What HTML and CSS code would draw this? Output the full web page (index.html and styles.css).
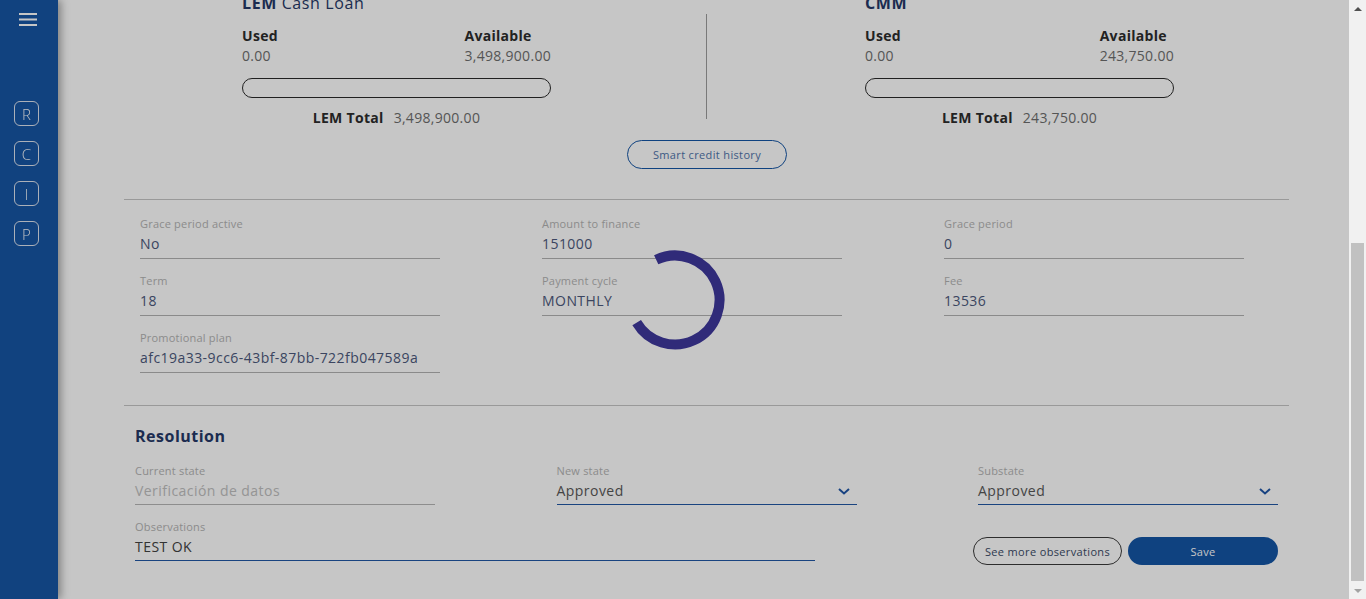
FILE: index.html
```html
<!DOCTYPE html>
<html lang="en">
<head>
<meta charset="utf-8">
<title>Credit request</title>
<link rel="stylesheet" href="styles.css">
</head>
<body>
<aside class="sidebar">
  <button class="menu-btn" aria-label="Menu">
    <svg width="18" height="14" viewBox="0 0 18 14"><path d="M0 1h18M0 6.5h18M0 12h18" stroke="#fff" stroke-width="2"/></svg>
  </button>
  <nav class="quick-nav">
    <a class="badge">R</a>
    <a class="badge">C</a>
    <a class="badge">I</a>
    <a class="badge">P</a>
  </nav>
</aside>

<main class="main">
  <section class="section">
    <h2 class="section-title">Customer information</h2>
    <div class="fields-grid">
      <div class="field"><div class="field-label">Name</div><div class="field-value">Juan Pérez</div></div>
      <div class="field"><div class="field-label">Document</div><div class="field-value">1020304050</div></div>
      <div class="field"><div class="field-label">Phone</div><div class="field-value">3001234567</div></div>
      <div class="field"><div class="field-label">Email</div><div class="field-value">juan@example.com</div></div>
      <div class="field"><div class="field-label">City</div><div class="field-value">Bogotá</div></div>
      <div class="field"><div class="field-label">Store</div><div class="field-value">Main</div></div>
      <div class="field"><div class="field-label">Product</div><div class="field-value">Cash Loan</div></div>
      <div class="field"><div class="field-label">Request date</div><div class="field-value">2023-05-10</div></div>
      <div class="field"><div class="field-label">Channel</div><div class="field-value">Web</div></div>
    </div>
  </section>
  <hr class="divider">

  <section class="credit-lines">
    <div class="credit-col">
      <h3 class="credit-title"><b>LEM</b> Cash Loan</h3>
      <div class="credit-figures">
        <div><div class="fig-label">Used</div><div class="fig-value">0.00</div></div>
        <div><div class="fig-label">Available</div><div class="fig-value">3,498,900.00</div></div>
      </div>
      <div class="bar"></div>
      <div class="credit-total"><b>LEM Total</b><span>3,498,900.00</span></div>
    </div>
    <div class="v-sep"></div>
    <div class="credit-col">
      <h3 class="credit-title"><b>CMM</b></h3>
      <div class="credit-figures">
        <div><div class="fig-label">Used</div><div class="fig-value">0.00</div></div>
        <div><div class="fig-label">Available</div><div class="fig-value">243,750.00</div></div>
      </div>
      <div class="bar"></div>
      <div class="credit-total"><b>LEM Total</b><span>243,750.00</span></div>
    </div>
  </section>
  <div class="center-row"><button class="btn btn-outline-blue">Smart credit history</button></div>
  <hr class="divider">

  <section class="fields-grid loan-grid">
    <div class="field"><div class="field-label">Grace period active</div><div class="field-value">No</div></div>
    <div class="field"><div class="field-label">Amount to finance</div><div class="field-value">151000</div></div>
    <div class="field"><div class="field-label">Grace period</div><div class="field-value">0</div></div>
    <div class="field"><div class="field-label">Term</div><div class="field-value">18</div></div>
    <div class="field"><div class="field-label">Payment cycle</div><div class="field-value">MONTHLY</div></div>
    <div class="field"><div class="field-label">Fee</div><div class="field-value">13536</div></div>
    <div class="field"><div class="field-label">Promotional plan</div><div class="field-value">afc19a33-9cc6-43bf-87bb-722fb047589a</div></div>
  </section>
  <hr class="divider divider-res">

  <section class="resolution">
    <h2 class="res-title">Resolution</h2>
    <div class="res-grid">
      <div class="field"><div class="field-label">Current state</div><div class="field-value disabled">Verificación de datos</div></div>
      <div class="field"><div class="field-label">New state</div><div class="field-value select"><span>Approved</span><svg class="chev" width="12" height="7" viewBox="0 0 12 7"><path d="M1 1l5 4.5L11 1" fill="none" stroke="#1f56a6" stroke-width="2"/></svg></div></div>
      <div class="field"><div class="field-label">Substate</div><div class="field-value select"><span>Approved</span><svg class="chev" width="12" height="7" viewBox="0 0 12 7"><path d="M1 1l5 4.5L11 1" fill="none" stroke="#1f56a6" stroke-width="2"/></svg></div></div>
    </div>
    <div class="obs-row">
      <div class="field obs-field"><div class="field-label">Observations</div><div class="field-value active">TEST OK</div></div>
      <div class="actions">
        <button class="btn btn-outline-dark">See more observations</button>
        <button class="btn btn-primary">Save</button>
      </div>
    </div>
  </section>
</main>

<div class="overlay">
  <svg class="spinner" width="100" height="100" viewBox="0 0 100 100">
    <circle cx="50" cy="50" r="44.5" fill="none" stroke="#302b79" stroke-width="10" stroke-dasharray="205 300" transform="rotate(245 50 50)"/>
  </svg>
</div>

<div class="scrollbar" aria-hidden="true">
  <div class="sb-btn"><span class="arrow-up"></span></div>
  <div class="sb-track"><div class="sb-thumb"></div></div>
  <div class="sb-btn"><span class="arrow-down"></span></div>
</div>
<script src="script.js"></script>
</body>
</html>
```

FILE: styles.css
```css
* { box-sizing: border-box; }
html, body { margin: 0; padding: 0; }
body {
  font-family: "Open Sans", "Liberation Sans", sans-serif;
  background: #ffffff;
  color: #424242;
}
button { font-family: inherit; }

.sidebar {
  position: fixed;
  left: 0; top: 0; bottom: 0;
  width: 58px;
  background: #1655a4;
  box-shadow: 3px 0 8px rgba(0,0,0,0.35);
  z-index: 5;
  display: flex;
  flex-direction: column;
  align-items: flex-start;
}
.menu-btn {
  margin: 12px 0 0 16px;
  width: 24px; height: 16px;
  padding: 0; border: 0; background: none;
  display: flex; align-items: center; justify-content: center;
}
.quick-nav {
  margin: 73px 0 0 14px;
  display: flex;
  flex-direction: column;
  gap: 15px;
}
.badge {
  width: 25px; height: 25px;
  border: 1px solid #dde3ee;
  border-radius: 6px;
  color: #f4f6fa;
  font-size: 15px;
  font-weight: 300;
  display: flex; align-items: center; justify-content: center;
}

.main {
  margin-left: 58px;
  padding: 24px 77px 34px 66px;
}

.section-title {
  margin: 0 0 18px 11px;
  font-size: 16px; line-height: 20px;
  color: #253867;
}
.divider {
  border: 0;
  border-top: 1px solid #c6c6c6;
  margin: 30px 0 0;
}

/* credit lines */
.credit-lines {
  display: flex;
  padding-left: 118px;
  margin-top: 40px;
}
.credit-col { width: 309px; }
.credit-title {
  margin: 0;
  font-size: 16px; line-height: 20px;
  font-weight: 400;
  letter-spacing: 0.6px;
  color: #253867;
}
.credit-title b { font-weight: 700; }
.credit-figures {
  margin-top: 14px;
  display: flex;
  justify-content: space-between;
}
.fig-label {
  font-size: 14px; line-height: 18px;
  font-weight: 700;
  letter-spacing: 0.3px;
  color: #2c2c2c;
}
.fig-value {
  margin-top: 2px;
  font-size: 14px; line-height: 18px;
  letter-spacing: 0.3px;
  color: #6e6e6e;
}
.bar {
  margin-top: 13px;
  height: 20px;
  border: 1px solid #2a2a2a;
  border-radius: 10px;
}
.credit-total {
  margin-top: 11px;
  display: flex;
  justify-content: center;
  gap: 10px;
  font-size: 14px; line-height: 18px;
  letter-spacing: 0.3px;
  color: #6e6e6e;
}
.credit-total b { color: #2c2c2c; }
.v-sep {
  width: 1px;
  background: #9c9c9c;
  margin: 21px 158px 8px 155px;
}
.center-row {
  display: flex;
  justify-content: center;
  margin-top: 13px;
  padding-left: 1px;
}
.btn {
  height: 29px;
  border-radius: 15px;
  font-size: 11px;
  letter-spacing: 0.35px;
  padding: 0;
  background: none;
  cursor: pointer;
}
.btn-outline-blue {
  width: 160px;
  border: 1px solid #1455a5;
  color: #4f74ab;
}

/* fields */
.fields-grid {
  display: grid;
  grid-template-columns: repeat(3, 300px);
  column-gap: 102px;
  row-gap: 15px;
  padding-left: 16px;
}
.loan-grid { margin-top: 17px; }
.field-label {
  font-size: 11px; line-height: 14px;
  letter-spacing: 0.2px;
  color: #b4b4b4;
}
.field-value {
  margin-top: 4px;
  font-size: 14px; line-height: 18px;
  letter-spacing: 0.45px;
  padding-bottom: 5px;
  border-bottom: 1px solid #b2b2b2;
  color: #4c597c;
}
.divider-res { margin-top: 32px; }

/* resolution */
.resolution { padding-left: 11px; padding-right: 11px; }
.res-title {
  margin: 20px 0 18px;
  font-size: 16px; line-height: 20px;
  letter-spacing: 0.5px;
  color: #253867;
}
.res-grid {
  display: grid;
  grid-template-columns: repeat(3, 300px);
  column-gap: 121.5px;
}
.res-grid .field-value, .obs-field .field-value { padding-bottom: 4px; }
.field-value.disabled { color: #c0c0c0; border-bottom-color: #b6b6b6; }
.field-value.select {
  color: #585858;
  border-bottom-color: #2258a5;
  display: flex;
  justify-content: space-between;
  align-items: center;
  padding-right: 7px;
}
.field-value.active { color: #424242; border-bottom-color: #2258a5; }
.obs-row {
  margin-top: 15px;
  display: flex;
  justify-content: space-between;
  align-items: flex-start;
}
.obs-field { width: 680px; }
.actions {
  margin-top: 17px;
  display: flex;
  gap: 6px;
}
.btn-outline-dark {
  width: 149px; height: 28px;
  border: 1px solid #3a3a3a;
  border-radius: 14px;
  color: #3a4a66;
}
.btn-primary {
  width: 150px; height: 28px;
  border: 0;
  border-radius: 14px;
  background: #1455a5;
  color: #ffffff;
}

/* loading overlay */
.overlay {
  position: fixed;
  top: 0; left: 0; bottom: 0; right: 17px;
  background: rgba(0,0,0,0.224);
  z-index: 10;
  display: flex;
  align-items: center;
  justify-content: center;
}

/* window scrollbar */
.scrollbar {
  position: fixed;
  top: 0; right: 0; bottom: 0;
  width: 17px;
  background: #f1f1f1;
  z-index: 11;
  display: flex;
  flex-direction: column;
}
.sb-btn {
  height: 17px;
  display: flex;
  align-items: center;
  justify-content: center;
}
.arrow-up {
  width: 0; height: 0;
  border-left: 4px solid transparent;
  border-right: 4px solid transparent;
  border-bottom: 4px solid #505050;
}
.arrow-down {
  width: 0; height: 0;
  border-left: 4px solid transparent;
  border-right: 4px solid transparent;
  border-top: 4px solid #a3a3a3;
}
.sb-track {
  flex: 1;
  padding: 226px 2px 1px;
}
.sb-thumb {
  height: 100%;
  background: #c1c1c1;
}
```

FILE: script.js
```js
window.scrollTo(0, document.documentElement.scrollHeight);
```
